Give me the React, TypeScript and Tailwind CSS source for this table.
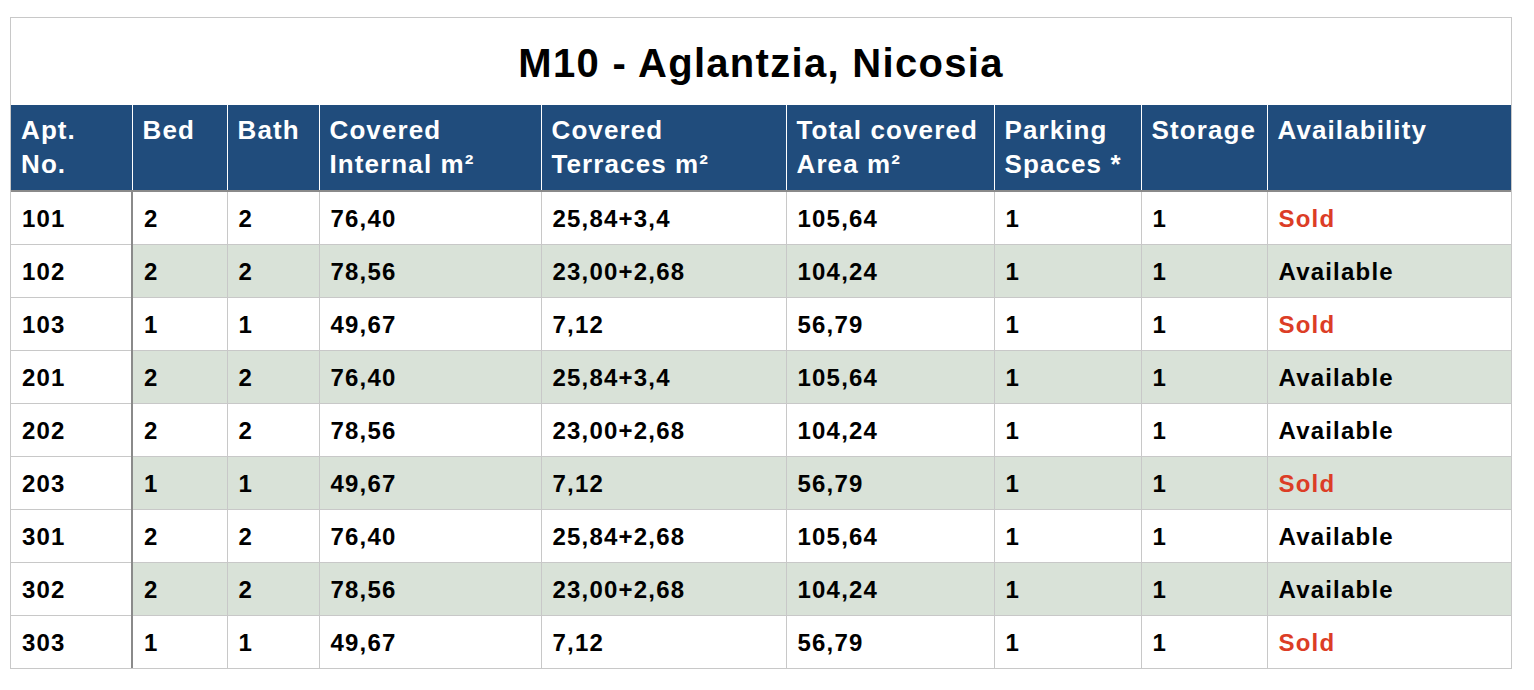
import React from 'react'

type Row = {
  apt: string
  bed: string
  bath: string
  internal: string
  terraces: string
  total: string
  parking: string
  storage: string
  sold: boolean
}

const rows: Row[] = [
  { apt: '101', bed: '2', bath: '2', internal: '76,40', terraces: '25,84+3,4', total: '105,64', parking: '1', storage: '1', sold: true },
  { apt: '102', bed: '2', bath: '2', internal: '78,56', terraces: '23,00+2,68', total: '104,24', parking: '1', storage: '1', sold: false },
  { apt: '103', bed: '1', bath: '1', internal: '49,67', terraces: '7,12', total: '56,79', parking: '1', storage: '1', sold: true },
  { apt: '201', bed: '2', bath: '2', internal: '76,40', terraces: '25,84+3,4', total: '105,64', parking: '1', storage: '1', sold: false },
  { apt: '202', bed: '2', bath: '2', internal: '78,56', terraces: '23,00+2,68', total: '104,24', parking: '1', storage: '1', sold: false },
  { apt: '203', bed: '1', bath: '1', internal: '49,67', terraces: '7,12', total: '56,79', parking: '1', storage: '1', sold: true },
  { apt: '301', bed: '2', bath: '2', internal: '76,40', terraces: '25,84+2,68', total: '105,64', parking: '1', storage: '1', sold: false },
  { apt: '302', bed: '2', bath: '2', internal: '78,56', terraces: '23,00+2,68', total: '104,24', parking: '1', storage: '1', sold: false },
  { apt: '303', bed: '1', bath: '1', internal: '49,67', terraces: '7,12', total: '56,79', parking: '1', storage: '1', sold: true },
]

const headers = [
  { label: 'Apt.\nNo.', w: 'w-[121px]' },
  { label: 'Bed', w: 'w-[95px]' },
  { label: 'Bath', w: 'w-[92px]' },
  { label: 'Covered\nInternal m²', w: 'w-[222px]' },
  { label: 'Covered\nTerraces m²', w: 'w-[245px]' },
  { label: 'Total covered\nArea m²', w: 'w-[208px]' },
  { label: 'Parking\nSpaces *', w: 'w-[147px]' },
  { label: 'Storage', w: 'w-[126px]' },
  { label: 'Availability', w: '' },
]

export default function App() {
  return (
    <div className="min-h-[690px] bg-white pt-[17px] px-[10px] font-['Liberation_Sans',Arial,sans-serif] font-bold text-black">
      <div className="w-[1502px] border border-[#c8c8c8] overflow-hidden">
        {/* Title */}
        <div className="h-[87px] flex items-center justify-center">
          <h1 className="text-[40px] tracking-[1.3px] leading-none pt-[3px]">M10 - Aglantzia, Nicosia</h1>
        </div>

        <table className="w-full table-fixed border-collapse">
          <thead>
            <tr className="bg-[#204c7c] text-white">
              {headers.map((h, i) => (
                <th
                  key={h.label}
                  className={`${h.w} h-[86px] align-top text-left font-bold text-[26px] leading-[34px] tracking-[1.1px] pt-[8px] pl-[10px] pr-1 whitespace-pre-line border-b-2 border-b-[#8a8a8a] ${
                    i < headers.length - 1 ? 'border-r border-r-white' : ''
                  }`}
                >
                  {h.label}
                </th>
              ))}
            </tr>
          </thead>
          <tbody>
            {rows.map((r, idx) => {
              const striped = idx % 2 === 1
              const cell = `h-[53px] align-middle pl-[11px] text-[24px] tracking-[1.2px] border-t border-[#c8c8c8] pt-[2px] ${
                striped ? 'bg-[#d9e2d8]' : 'bg-white'
              }`
              const values = [r.bed, r.bath, r.internal, r.terraces, r.total, r.parking, r.storage]
              return (
                <tr key={r.apt}>
                  <td className="h-[53px] align-middle pl-[11px] pt-[2px] text-[24px] tracking-[1.2px] bg-white border-t border-[#c8c8c8] border-r-2 border-r-[#8a8a8a]">
                    {r.apt}
                  </td>
                  {values.map((v, i) => (
                    <td key={i} className={`${cell} border-r border-r-[#c8c8c8]`}>
                      {v}
                    </td>
                  ))}
                  <td className={`${cell} ${r.sold ? 'text-[#dc3d26]' : 'text-black'}`}>
                    {r.sold ? 'Sold' : 'Available'}
                  </td>
                </tr>
              )
            })}
          </tbody>
        </table>
      </div>
    </div>
  )
}
